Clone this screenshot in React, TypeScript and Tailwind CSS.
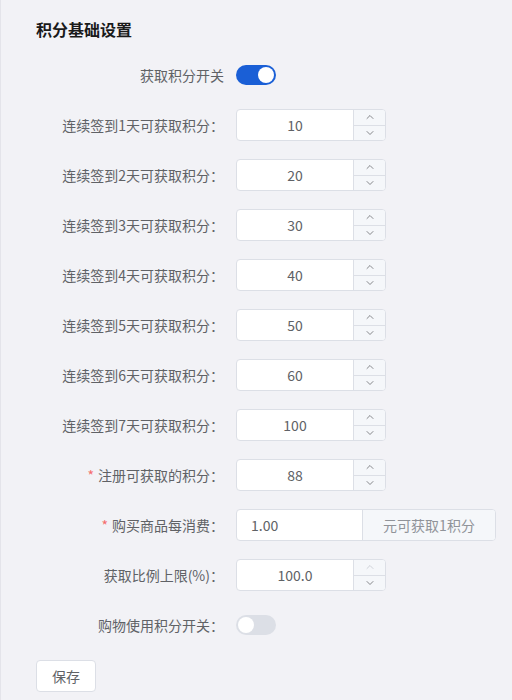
import { ChevronUp, ChevronDown } from 'lucide-react'

interface Row {
  label: string
  value: string
  required?: boolean
  upDisabled?: boolean
}

const rows: Row[] = [
  { label: '连续签到1天可获取积分：', value: '10' },
  { label: '连续签到2天可获取积分：', value: '20' },
  { label: '连续签到3天可获取积分：', value: '30' },
  { label: '连续签到4天可获取积分：', value: '40' },
  { label: '连续签到5天可获取积分：', value: '50' },
  { label: '连续签到6天可获取积分：', value: '60' },
  { label: '连续签到7天可获取积分：', value: '100' },
  { label: '注册可获取的积分：', value: '88', required: true },
]

function Label({ text, required }: { text: string; required?: boolean }) {
  return (
    <div className="w-[200px] shrink-0 pr-0 text-right text-[14px] text-[#606266]">
      {required && <span className="mr-1 text-[#f56c6c]">*</span>}
      {text}
    </div>
  )
}

function NumberInput({ value, upDisabled }: { value: string; upDisabled?: boolean }) {
  return (
    <div className="flex h-8 w-[150px] overflow-hidden rounded border border-[#dcdfe6] bg-white">
      <div className="flex flex-1 items-center justify-center text-[14px] text-[#606266]">{value}</div>
      <div className="flex w-[32px] flex-col border-l border-[#dcdfe6] bg-[#f5f7fa]">
        <div className="flex flex-1 items-center justify-center border-b border-[#dcdfe6]">
          <ChevronUp size={12} strokeWidth={1.5} className={upDisabled ? 'text-[#c0c4cc]' : 'text-[#606266]'} />
        </div>
        <div className="flex flex-1 items-center justify-center">
          <ChevronDown size={12} strokeWidth={1.5} className="text-[#606266]" />
        </div>
      </div>
    </div>
  )
}

function Switch({ on }: { on: boolean }) {
  return (
    <div
      className={`flex h-5 w-10 items-center rounded-full px-[2px] ${
        on ? 'justify-end bg-[#1a5fd6]' : 'justify-start bg-[#dcdfe6]'
      }`}
    >
      <div className="h-4 w-4 rounded-full bg-white" />
    </div>
  )
}

export default function App() {
  return (
    <div
      className="min-h-[700px] border-l border-[#e4e4ea] bg-[#f2f2f6] pt-[18px]"
      style={{ fontFamily: '"Noto Sans CJK SC", "Noto Sans", sans-serif' }}
    >
      <h1 className="pl-[35px] text-[16px] font-bold leading-[22px] text-[#1a1a1a]">积分基础设置</h1>

      <div className="mt-[19px] flex flex-col gap-[18px] pl-[23px]">
        <div className="flex h-8 items-center gap-3">
          <Label text="获取积分开关" />
          <Switch on />
        </div>

        {rows.map((row) => (
          <div key={row.label} className="flex h-8 items-center gap-3">
            <Label text={row.label} required={row.required} />
            <NumberInput value={row.value} />
          </div>
        ))}

        <div className="flex h-8 items-center gap-3">
          <Label text="购买商品每消费：" required />
          <div className="flex h-8 w-[260px] overflow-hidden rounded border border-[#dcdfe6] bg-white">
            <div className="flex flex-1 items-center px-[14px] text-[14px] text-[#606266]">1.00</div>
            <div className="flex w-[133px] items-center justify-center border-l border-[#dcdfe6] bg-[#f5f7fa] text-[14px] text-[#909399]">
              元可获取1积分
            </div>
          </div>
        </div>

        <div className="flex h-8 items-center gap-3">
          <Label text="获取比例上限(%)：" />
          <NumberInput value="100.0" upDisabled />
        </div>

        <div className="flex h-8 items-center gap-3">
          <Label text="购物使用积分开关：" />
          <Switch on={false} />
        </div>
      </div>

      <div className="mt-[19px] pl-[35px]">
        <button className="h-8 w-[60px] rounded border border-[#dcdfe6] bg-white text-[14px] text-[#606266]">
          保存
        </button>
      </div>
    </div>
  )
}
